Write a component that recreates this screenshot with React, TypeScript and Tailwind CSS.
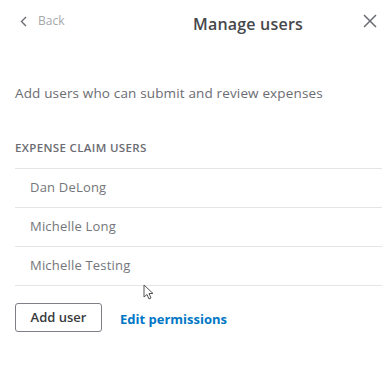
import React from "react";

export default function App() {
  const users = ["Dan DeLong", "Michelle Long", "Michelle Testing"];
  return (
    <div
      className="w-[385px] h-[368px] bg-white relative overflow-hidden"
      style={{ fontFamily: "'Open Sans', 'Noto Sans', sans-serif" }}
    >
      <div className="h-[42px] flex items-center justify-between pl-[20px] pr-[7px]">
        <div className="flex items-center gap-[11px] text-[#a5a7ab] text-[12px] w-[100px]">
          <svg width="7" height="11" viewBox="0 0 7 11" fill="none">
            <path d="M6 1L1.5 5.5L6 10" stroke="#6b6c72" strokeWidth="1.4" />
          </svg>
          <span>Back</span>
        </div>
        <div className="text-[16px] font-semibold text-[#46474b] ml-[73px] mt-[5px] tracking-[0.2px]">
          Manage users
        </div>
        <div className="flex-1" />
        <button className="w-[16px] h-[16px] flex items-center justify-center">
          <svg width="14" height="14" viewBox="0 0 14 14" fill="none">
            <path d="M1 1L13 13M13 1L1 13" stroke="#6b6c72" strokeWidth="1.5" />
          </svg>
        </button>
      </div>

      <div className="pl-[15px] mt-[42px] text-[13.5px] text-[#6b6c72] leading-[18px] tracking-[0.15px]">
        Add users who can submit and review expenses
      </div>

      <div className="pl-[15px] mt-[39px] text-[11.5px] font-semibold text-[#6b6c72] leading-[14px] tracking-[0.35px]">
        EXPENSE CLAIM USERS
      </div>

      <div className="ml-[15px] mr-[3px] mt-[13px] border-t border-[#e3e5e8]">
        {users.map((u) => (
          <div
            key={u}
            className="h-[39px] flex items-center pl-[15px] border-b border-[#e3e5e8] text-[13px] text-[#74767b] tracking-[0.2px]"
          >
            {u}
          </div>
        ))}
      </div>

      <div className="pl-[15px] mt-[17px] flex items-center gap-[18px]">
        <button className="w-[87px] h-[29px] border-[1.5px] border-[#7c7f85] rounded-[3px] text-[13px] font-semibold text-[#393a3d] flex items-center justify-center">
          Add user
        </button>
        <a className="text-[13px] font-bold text-[#0077c5] mt-[5px]">Edit permissions</a>
      </div>

      <svg
        className="absolute left-[143px] top-[284px]"
        width="12"
        height="17"
        viewBox="0 0 12 17"
      >
        <path
          d="M1 1L1 13L4 10.5L6 15L8 14L6 9.5L10 9.5Z"
          fill="white"
          stroke="#555"
          strokeWidth="1"
          strokeLinejoin="round"
        />
      </svg>
    </div>
  );
}
